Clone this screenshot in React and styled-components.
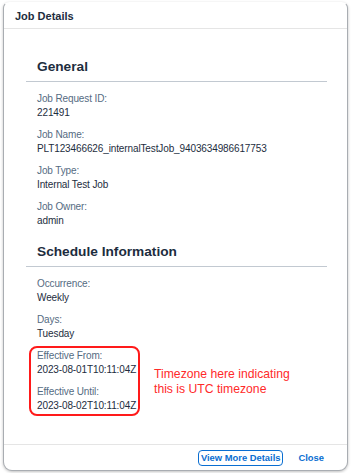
import React from 'react';
import styled, { createGlobalStyle } from 'styled-components';

const GlobalStyle = createGlobalStyle`
  html, body {
    margin: 0;
    padding: 0;
    background: #fff;
    font-family: "Liberation Sans", Arial, sans-serif;
  }
`;

const Page = styled.div`
  width: 353px;
  height: 473px;
  padding: 2px 0 0 3px;
  box-sizing: border-box;
  overflow: hidden;
`;

const Dialog = styled.div`
  width: 345px;
  height: 469px;
  box-sizing: border-box;
  display: flex;
  flex-direction: column;
  background: #fff;
  border: 1px solid #a9adb2;
  border-top-color: transparent;
  border-radius: 6px 6px 9px 9px;
  box-shadow: 0 1px 3px rgba(0, 0, 0, 0.25);
`;

const Header = styled.div`
  height: 25px;
  display: flex;
  align-items: center;
  padding-left: 11px;
  border-bottom: 1px solid #e5e5e5;
  font-size: 11px;
  font-weight: 700;
  color: #1d2d3e;
`;

const Body = styled.div`
  flex: 1;
  padding: 28px 20px 0 22px;
`;

const Section = styled.section`
  margin-bottom: 14px;
`;

const SectionTitle = styled.h2`
  margin: 0 0 10px;
  padding: 0 0 4px 11px;
  height: 20px;
  line-height: 20px;
  font-size: 13.7px;
  font-weight: 700;
  color: #1d2d3e;
  border-bottom: 1px solid #c2c9d1;
`;

const Field = styled.div`
  padding-left: 11px;
  margin-bottom: 8px;
  line-height: 14px;
  font-size: 10px;
  letter-spacing: -0.12px;
`;

const Label = styled.div`
  color: #556b82;
`;

const Value = styled.div`
  color: #1d2d3e;
`;

const HighlightRow = styled.div`
  display: flex;
  align-items: center;
`;

const Highlighted = styled.div`
  position: relative;
  width: 114px;
  flex-shrink: 0;
`;

const Marker = styled.div`
  position: absolute;
  left: 3px;
  top: -3px;
  width: 111px;
  height: 70px;
  box-sizing: border-box;
  border: 2px solid #ff1a1a;
  border-radius: 8px;
  pointer-events: none;
`;

const Note = styled.div`
  margin: 0 0 7px 14px;
  color: #ff2a2a;
  font-size: 12.2px;
  line-height: 15px;
  white-space: nowrap;
`;

const Footer = styled.div`
  height: 25px;
  display: flex;
  align-items: center;
  justify-content: flex-end;
  gap: 12px;
  padding-right: 20px;
  border-top: 1px solid #e5e5e5;
`;

const Button = styled.button`
  font-family: inherit;
  font-size: 9.4px;
  font-weight: 700;
  color: #0a6ed1;
  background: #fff;
  border: 1px solid ${({ $outlined }) => ($outlined ? '#0a6ed1' : 'transparent')};
  border-radius: 4px;
  height: 16px;
  padding: 0 2px;
  line-height: 14px;
  cursor: pointer;
`;

const general = [
  ['Job Request ID:', '221491'],
  ['Job Name:', 'PLT123466626_internalTestJob_9403634986617753'],
  ['Job Type:', 'Internal Test Job'],
  ['Job Owner:', 'admin'],
];

const schedule = [
  ['Occurrence:', 'Weekly'],
  ['Days:', 'Tuesday'],
];

const effective = [
  ['Effective From:', '2023-08-01T10:11:04Z'],
  ['Effective Until:', '2023-08-02T10:11:04Z'],
];

const renderField = ([label, value]) => (
  <Field key={label}>
    <Label>{label}</Label>
    <Value>{value}</Value>
  </Field>
);

export default function App() {
  return (
    <Page>
      <GlobalStyle />
      <Dialog>
        <Header>Job Details</Header>
        <Body>
          <Section>
            <SectionTitle>General</SectionTitle>
            {general.map(renderField)}
          </Section>
          <Section>
            <SectionTitle>Schedule Information</SectionTitle>
            {schedule.map(renderField)}
            <HighlightRow>
              <Highlighted>
                {effective.map(renderField)}
                <Marker />
              </Highlighted>
              <Note>
                Timezone here indicating
                <br />
                this is UTC timezone
              </Note>
            </HighlightRow>
          </Section>
        </Body>
        <Footer>
          <Button $outlined>View More Details</Button>
          <Button>Close</Button>
        </Footer>
      </Dialog>
    </Page>
  );
}
